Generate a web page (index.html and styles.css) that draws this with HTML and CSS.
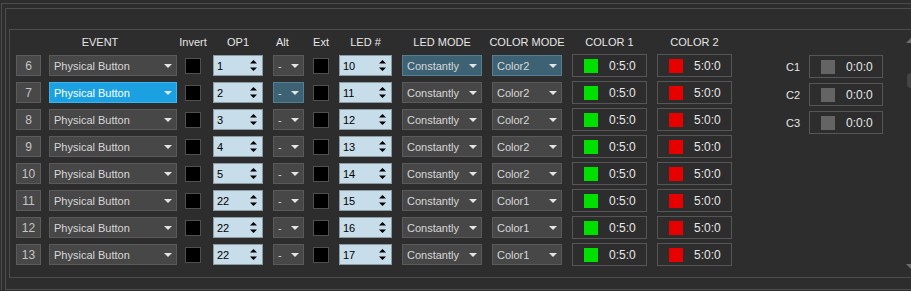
FILE: index.html
```html
<!DOCTYPE html>
<html>
<head>
<meta charset="utf-8">
<link rel="stylesheet" href="styles.css">
</head>
<body>
<div class="f1"><div class="f2"><div class="f3">
  <div class="table">
    <div class="hd w-num"></div>
    <div class="hd w-ev hd-ev">EVENT</div>
    <div class="hd w-chk">Invert</div>
    <div class="hd w-op">OP1</div>
    <div class="hd w-alt hd-alt">Alt</div>
    <div class="hd w-chk">Ext</div>
    <div class="hd w-led">LED #</div>
    <div class="hd w-lm">LED MODE</div>
    <div class="hd w-cm">COLOR MODE</div>
    <div class="hd w-col">COLOR 1</div>
    <div class="hd w-col">COLOR 2</div>

    <div class="num">6</div>
    <div class="cb w-ev"><span>Physical Button</span><i class="dd"></i></div>
    <div class="chk"></div>
    <div class="sp w-op"><span>1</span><svg class="ud" width="7" height="13" viewBox="0 0 7 13"><path d="M0 4.5L3.5 1L7 4.5Z M0 8.5L7 8.5L3.5 12Z"/></svg></div>
    <div class="cb w-alt"><span>-</span><i class="dd"></i></div>
    <div class="chk"></div>
    <div class="sp w-led"><span>10</span><svg class="ud" width="7" height="13" viewBox="0 0 7 13"><path d="M0 4.5L3.5 1L7 4.5Z M0 8.5L7 8.5L3.5 12Z"/></svg></div>
    <div class="cb w-lm teal"><span>Constantly</span><i class="dd"></i></div>
    <div class="cb w-cm teal"><span>Color2</span><i class="dd"></i></div>
    <div class="clr w-col"><i class="sw green"></i><span>0:5:0</span></div>
    <div class="clr w-col"><i class="sw red"></i><span>5:0:0</span></div>

    <div class="num">7</div>
    <div class="cb w-ev blue"><span>Physical Button</span><i class="dd"></i></div>
    <div class="chk"></div>
    <div class="sp w-op"><span>2</span><svg class="ud" width="7" height="13" viewBox="0 0 7 13"><path d="M0 4.5L3.5 1L7 4.5Z M0 8.5L7 8.5L3.5 12Z"/></svg></div>
    <div class="cb w-alt teal"><span>-</span><i class="dd"></i></div>
    <div class="chk"></div>
    <div class="sp w-led"><span>11</span><svg class="ud" width="7" height="13" viewBox="0 0 7 13"><path d="M0 4.5L3.5 1L7 4.5Z M0 8.5L7 8.5L3.5 12Z"/></svg></div>
    <div class="cb w-lm"><span>Constantly</span><i class="dd"></i></div>
    <div class="cb w-cm"><span>Color2</span><i class="dd"></i></div>
    <div class="clr w-col"><i class="sw green"></i><span>0:5:0</span></div>
    <div class="clr w-col"><i class="sw red"></i><span>5:0:0</span></div>

    <div class="num">8</div>
    <div class="cb w-ev"><span>Physical Button</span><i class="dd"></i></div>
    <div class="chk"></div>
    <div class="sp w-op"><span>3</span><svg class="ud" width="7" height="13" viewBox="0 0 7 13"><path d="M0 4.5L3.5 1L7 4.5Z M0 8.5L7 8.5L3.5 12Z"/></svg></div>
    <div class="cb w-alt"><span>-</span><i class="dd"></i></div>
    <div class="chk"></div>
    <div class="sp w-led"><span>12</span><svg class="ud" width="7" height="13" viewBox="0 0 7 13"><path d="M0 4.5L3.5 1L7 4.5Z M0 8.5L7 8.5L3.5 12Z"/></svg></div>
    <div class="cb w-lm"><span>Constantly</span><i class="dd"></i></div>
    <div class="cb w-cm"><span>Color2</span><i class="dd"></i></div>
    <div class="clr w-col"><i class="sw green"></i><span>0:5:0</span></div>
    <div class="clr w-col"><i class="sw red"></i><span>5:0:0</span></div>

    <div class="num">9</div>
    <div class="cb w-ev"><span>Physical Button</span><i class="dd"></i></div>
    <div class="chk"></div>
    <div class="sp w-op"><span>4</span><svg class="ud" width="7" height="13" viewBox="0 0 7 13"><path d="M0 4.5L3.5 1L7 4.5Z M0 8.5L7 8.5L3.5 12Z"/></svg></div>
    <div class="cb w-alt"><span>-</span><i class="dd"></i></div>
    <div class="chk"></div>
    <div class="sp w-led"><span>13</span><svg class="ud" width="7" height="13" viewBox="0 0 7 13"><path d="M0 4.5L3.5 1L7 4.5Z M0 8.5L7 8.5L3.5 12Z"/></svg></div>
    <div class="cb w-lm"><span>Constantly</span><i class="dd"></i></div>
    <div class="cb w-cm"><span>Color2</span><i class="dd"></i></div>
    <div class="clr w-col"><i class="sw green"></i><span>0:5:0</span></div>
    <div class="clr w-col"><i class="sw red"></i><span>5:0:0</span></div>

    <div class="num">10</div>
    <div class="cb w-ev"><span>Physical Button</span><i class="dd"></i></div>
    <div class="chk"></div>
    <div class="sp w-op"><span>5</span><svg class="ud" width="7" height="13" viewBox="0 0 7 13"><path d="M0 4.5L3.5 1L7 4.5Z M0 8.5L7 8.5L3.5 12Z"/></svg></div>
    <div class="cb w-alt"><span>-</span><i class="dd"></i></div>
    <div class="chk"></div>
    <div class="sp w-led"><span>14</span><svg class="ud" width="7" height="13" viewBox="0 0 7 13"><path d="M0 4.5L3.5 1L7 4.5Z M0 8.5L7 8.5L3.5 12Z"/></svg></div>
    <div class="cb w-lm"><span>Constantly</span><i class="dd"></i></div>
    <div class="cb w-cm"><span>Color2</span><i class="dd"></i></div>
    <div class="clr w-col"><i class="sw green"></i><span>0:5:0</span></div>
    <div class="clr w-col"><i class="sw red"></i><span>5:0:0</span></div>

    <div class="num">11</div>
    <div class="cb w-ev"><span>Physical Button</span><i class="dd"></i></div>
    <div class="chk"></div>
    <div class="sp w-op"><span>22</span><svg class="ud" width="7" height="13" viewBox="0 0 7 13"><path d="M0 4.5L3.5 1L7 4.5Z M0 8.5L7 8.5L3.5 12Z"/></svg></div>
    <div class="cb w-alt"><span>-</span><i class="dd"></i></div>
    <div class="chk"></div>
    <div class="sp w-led"><span>15</span><svg class="ud" width="7" height="13" viewBox="0 0 7 13"><path d="M0 4.5L3.5 1L7 4.5Z M0 8.5L7 8.5L3.5 12Z"/></svg></div>
    <div class="cb w-lm"><span>Constantly</span><i class="dd"></i></div>
    <div class="cb w-cm"><span>Color1</span><i class="dd"></i></div>
    <div class="clr w-col"><i class="sw green"></i><span>0:5:0</span></div>
    <div class="clr w-col"><i class="sw red"></i><span>5:0:0</span></div>

    <div class="num">12</div>
    <div class="cb w-ev"><span>Physical Button</span><i class="dd"></i></div>
    <div class="chk"></div>
    <div class="sp w-op"><span>22</span><svg class="ud" width="7" height="13" viewBox="0 0 7 13"><path d="M0 4.5L3.5 1L7 4.5Z M0 8.5L7 8.5L3.5 12Z"/></svg></div>
    <div class="cb w-alt"><span>-</span><i class="dd"></i></div>
    <div class="chk"></div>
    <div class="sp w-led"><span>16</span><svg class="ud" width="7" height="13" viewBox="0 0 7 13"><path d="M0 4.5L3.5 1L7 4.5Z M0 8.5L7 8.5L3.5 12Z"/></svg></div>
    <div class="cb w-lm"><span>Constantly</span><i class="dd"></i></div>
    <div class="cb w-cm"><span>Color1</span><i class="dd"></i></div>
    <div class="clr w-col"><i class="sw green"></i><span>0:5:0</span></div>
    <div class="clr w-col"><i class="sw red"></i><span>5:0:0</span></div>

    <div class="num">13</div>
    <div class="cb w-ev"><span>Physical Button</span><i class="dd"></i></div>
    <div class="chk"></div>
    <div class="sp w-op"><span>22</span><svg class="ud" width="7" height="13" viewBox="0 0 7 13"><path d="M0 4.5L3.5 1L7 4.5Z M0 8.5L7 8.5L3.5 12Z"/></svg></div>
    <div class="cb w-alt"><span>-</span><i class="dd"></i></div>
    <div class="chk"></div>
    <div class="sp w-led"><span>17</span><svg class="ud" width="7" height="13" viewBox="0 0 7 13"><path d="M0 4.5L3.5 1L7 4.5Z M0 8.5L7 8.5L3.5 12Z"/></svg></div>
    <div class="cb w-lm"><span>Constantly</span><i class="dd"></i></div>
    <div class="cb w-cm"><span>Color1</span><i class="dd"></i></div>
    <div class="clr w-col"><i class="sw green"></i><span>0:5:0</span></div>
    <div class="clr w-col"><i class="sw red"></i><span>5:0:0</span></div>
  </div>

  <div class="side">
    <div class="lbl">C1</div>
    <div class="clr w-c"><i class="sw gray"></i><span>0:0:0</span></div>
    <div class="lbl">C2</div>
    <div class="clr w-c"><i class="sw gray"></i><span>0:0:0</span></div>
    <div class="lbl">C3</div>
    <div class="clr w-c"><i class="sw gray"></i><span>0:0:0</span></div>
  </div>

  <svg class="scroll" width="7" height="247" viewBox="0 0 7 247">
    <path d="M2 13L7 8L12 13Z" fill="#6e6e6e"/>
    <rect x="3" y="43" width="10" height="15" rx="4" fill="#454545"/>
    <path d="M2 234L12 234L7 239Z" fill="#6e6e6e"/>
  </svg>
</div></div></div>
</body>
</html>
```

FILE: styles.css
```css
* { box-sizing: border-box; }
html, body { margin: 0; height: 100%; }
body {
  background: #2d2d2d;
  font-family: "Liberation Sans", Arial, sans-serif;
  font-size: 11px;
  color: #dcdcdc;
  overflow: hidden;
  padding: 3px 0 0 1px;
}
.f1 {
  border-top: 1px solid #4c4c4c;
  border-left: 1px solid #4c4c4c;
  padding: 4px 0 0 3px;
}
.f2 {
  border-top: 1px solid #4c4c4c;
  border-left: 1px solid #4c4c4c;
  border-bottom: 1px solid #4c4c4c;
  padding: 20px 0 11px 3px;
}
.f3 {
  border-top: 1px solid #4c4c4c;
  border-left: 1px solid #4c4c4c;
  border-bottom: 1px solid #4c4c4c;
  height: 249px;
  display: flex;
  align-items: flex-start;
}
.table {
  display: grid;
  grid-template-columns: 33px 136px 28px 60px 40px 26px 63px 90px 80px 85px 75px;
  row-gap: 4px;
  align-items: center;
  padding: 6px 0 0 6px;
}
.hd {
  display: flex;
  justify-content: center;
  font-size: 11px;
  line-height: 12px;
  margin-bottom: 2px;
  color: #e6e6e6;
  white-space: nowrap;
}
.hd-ev { padding-right: 26px; }
.hd-alt { justify-content: flex-start; padding-left: 3px; }
.w-num { width: 25px; }
.w-ev { width: 128px; }
.w-chk { width: 16px; }
.w-op { width: 50px; }
.w-alt { width: 31px; }
.w-led { width: 53px; }
.w-lm { width: 80px; }
.w-cm { width: 70px; }
.w-col { width: 75px; }
.w-c { width: 74px; }

.num {
  width: 25px;
  height: 21px;
  background: #484848;
  border: 1px solid #5c5c5c;
  color: #c4c4c4;
  font-size: 12px;
  display: flex;
  align-items: center;
  justify-content: center;
}
.cb {
  height: 21px;
  background: #474747;
  border: 1px solid #5a5a5a;
  color: #d8d8d8;
  display: flex;
  align-items: center;
  padding-left: 4px;
  white-space: nowrap;
}
.cb.blue { background: #1ba1e2; border-color: #3fb3ee; color: #ffffff; }
.cb.teal { background: #3d6274; border-color: #557e92; }
.dd {
  margin-left: auto;
  margin-right: 4px;
  width: 0;
  height: 0;
  border-left: 4px solid transparent;
  border-right: 4px solid transparent;
  border-top: 4px solid #e4e4e4;
}
.chk {
  width: 16px;
  height: 16px;
  background: #000;
  border: 1px solid #505050;
}
.sp {
  height: 21px;
  background: #c7dde9;
  border: 1px solid #8c9ba3;
  color: #000;
  display: flex;
  align-items: center;
  padding-left: 3px;
}
.ud {
  margin-left: auto;
  margin-right: 5px;
  fill: #000;
}
.clr {
  height: 23px;
  border: 1px solid #565656;
  display: flex;
  align-items: center;
  padding-left: 11px;
  color: #e8e8e8;
  font-size: 12px;
}
.sw { width: 14px; height: 14px; margin-right: 11px; }
.green { background: #00e000; }
.red { background: #e60000; }
.gray { background: #646464; }

.side {
  display: grid;
  grid-template-columns: 23px 74px;
  row-gap: 5px;
  align-items: center;
  margin-left: 54px;
  padding-top: 25px;
}
.lbl { color: #e6e6e6; font-size: 11px; }
.scroll { margin-left: auto; flex: none; }
```
